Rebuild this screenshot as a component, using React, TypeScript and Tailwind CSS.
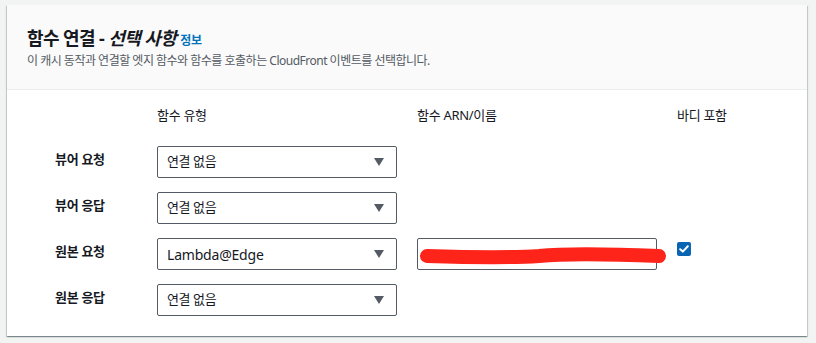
import React from 'react';

const rows = [
  { label: '뷰어 요청', value: '연결 없음' },
  { label: '뷰어 응답', value: '연결 없음' },
  { label: '원본 요청', value: 'Lambda@Edge', arn: true },
  { label: '원본 응답', value: '연결 없음' },
];

function SelectBox({ value }: { value: string }) {
  const latin = /^[A-Za-z@]+$/.test(value);
  return (
    <div className="flex h-8 w-[240px] items-center justify-between rounded-[2px] border border-[#545b64] bg-white pl-[9px] pr-[12px]">
      <span className={latin ? 'text-[14px] tracking-[-0.2px] text-[#16191f]' : 'text-[13px] tracking-[-0.4px] text-[#16191f]'}>{value}</span>
      <svg width="10" height="8" viewBox="0 0 10 8">
        <path d="M0 0 H10 L5 8 Z" fill="#545b64" />
      </svg>
    </div>
  );
}

function ArnInput() {
  return (
    <div className="relative h-8 w-[240px] rounded-[2px] border border-[#545b64] bg-white">
      <svg className="absolute left-[1px] top-[5px]" width="248" height="24" viewBox="0 0 248 24">
        <path
          d="M8 12 C 40 13, 90 14, 120 12 C 150 9, 190 10, 240 12"
          stroke="#ff2419"
          strokeWidth="14"
          strokeLinecap="round"
          fill="none"
        />
      </svg>
    </div>
  );
}

function Checkbox() {
  return (
    <div className="mt-1 flex h-[14px] w-[14px] items-center justify-center rounded-[2px] bg-[#0a64b4]">
      <svg width="10" height="8" viewBox="0 0 10 8">
        <path d="M1.2 4.2 L3.8 6.6 L8.8 1.2" stroke="white" strokeWidth="2" fill="none" strokeLinecap="round" strokeLinejoin="round" />
      </svg>
    </div>
  );
}

export default function App() {
  return (
    <div className="h-[343px] w-[816px] bg-[#f2f3f3] pl-[7px] pt-[5px] font-['Noto_Sans','Noto_Sans_CJK_KR',sans-serif] text-[#16191f]">
      <div className="w-[800px] bg-white shadow-[0_1px_1px_0_rgba(0,28,36,0.3),1px_1px_1px_0_rgba(0,28,36,0.15),-1px_1px_1px_0_rgba(0,28,36,0.15)]">
        <div className="h-[85px] border-b border-[#eaeded] bg-[#fafafa] px-5 pt-[20px]">
          <div className="flex items-baseline">
            <h2 className="text-[18px] font-bold leading-[26px] tracking-[-0.6px]">
              함수 연결 - <span className="italic">선택 사항</span>
            </h2>
            <a className="ml-[4px] text-[12px] font-bold tracking-[-0.3px] text-[#0073bb]">정보</a>
          </div>
          <p className="mt-[1px] text-[12px] leading-[18px] tracking-[-0.5px] text-[#545b64]">
            이 캐시 동작과 연결할 엣지 함수와 함수를 호출하는 CloudFront 이벤트를 선택합니다.
          </p>
        </div>

        <div className="pb-5 pt-[16px]">
          <div className="flex h-5 items-center text-[13px] tracking-[-0.3px]">
            <div className="w-[150px]" />
            <div className="w-[260px]">함수 유형</div>
            <div className="w-[260px]">함수 ARN/이름</div>
            <div>바디 포함</div>
          </div>
          <div className="mt-[20px] flex flex-col gap-[14px]">
            {rows.map((r) => (
              <div key={r.label} className="flex items-center">
                <div className="w-[150px] pb-[4px] pl-[48px] text-[13px] font-bold tracking-[-0.3px]">{r.label}</div>
                <div className="w-[260px]">
                  <SelectBox value={r.value} />
                </div>
                <div className="w-[260px]">{r.arn && <ArnInput />}</div>
                <div className="self-start">{r.arn && <Checkbox />}</div>
              </div>
            ))}
          </div>
        </div>
      </div>
    </div>
  );
}
